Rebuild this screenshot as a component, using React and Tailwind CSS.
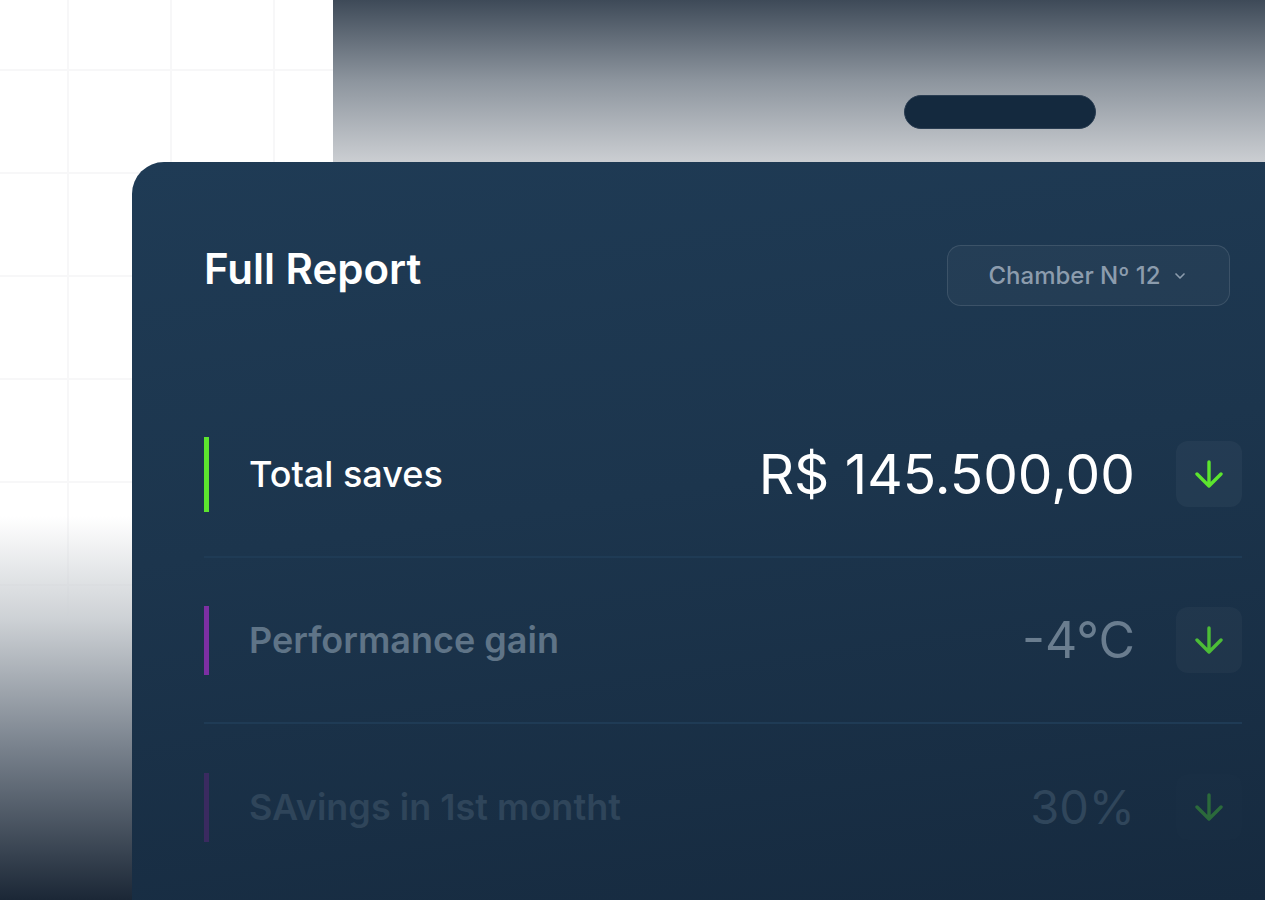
import { ChevronDown } from "lucide-react";

// ── Row data ─────────────────────────────────────────────
const ROWS = [
  {
    label: "Total saves",
    value: "R$ 145.500,00",
    bar: "bg-[#5ce52e] h-[75px]",
    labelCls: "text-white font-medium",
    valueCls: "text-white text-[55px]",
    arrow: "#5ce52e",
    box: "bg-[#ffffff0a]",
  },
  {
    label: "Performance gain",
    value: "-4°C",
    bar: "bg-[#7d2fa3] h-[69px]",
    labelCls: "text-[#5f7487] font-semibold",
    valueCls: "text-[#6a7d8f] text-[50px]",
    arrow: "#4cbd37",
    box: "bg-[#ffffff08]",
  },
  {
    label: "SAvings in 1st montht",
    value: "30%",
    bar: "bg-[#3a2a60] h-[69px]",
    labelCls: "text-[#2f455a] font-semibold",
    valueCls: "text-[#30465b] text-[47px]",
    arrow: "#2b6a3b",
    box: "bg-[#ffffff02]",
  },
];

function ArrowDownIcon({ color }) {
  return (
    <svg width="28" height="28" viewBox="0 0 28 28" fill="none">
      <path
        d="M14 2v24M2 14l12 12 12-12"
        stroke={color}
        strokeWidth="3.4"
        strokeLinecap="round"
        strokeLinejoin="round"
      />
    </svg>
  );
}

function Row({ row, last }) {
  return (
    <div
      className={`h-[166px] flex items-center ${
        last ? "" : "border-b-2 border-[#1f3b55]"
      }`}
    >
      <div className={`w-[5px] ${row.bar}`} />
      <div className={`ml-10 text-[36px] leading-[44px] ${row.labelCls}`}>
        {row.label}
      </div>
      <div className={`ml-auto leading-[64px] ${row.valueCls}`}>
        {row.value}
      </div>
      <div
        className={`ml-[41px] w-[66px] h-[66px] rounded-[12px] flex items-center justify-center ${row.box}`}
      >
        <ArrowDownIcon color={row.arrow} />
      </div>
    </div>
  );
}

export default function App() {
  return (
    <div className="relative w-full h-[900px] overflow-hidden bg-white font-['Inter','Noto_Sans',sans-serif] bg-[linear-gradient(to_right,#f7f7f8_2px,transparent_2px),linear-gradient(to_bottom,#f7f7f8_2px,transparent_2px)] bg-size-[103px_103px] bg-position-[67px_69px]">
      {/* ── Top strip ── */}
      <div className="flex h-[162px]">
        <div className="w-[333px] shrink-0" />
        <div className="flex-1 bg-[linear-gradient(to_bottom,#3e4a58,#8d959e_50%,#cbced2)] pl-[571px] pt-[95px]">
          <div className="w-[192px] h-[34px] rounded-full bg-[#14293e] border border-[#2a3d52]" />
        </div>
      </div>

      {/* ── Lower area ── */}
      <div className="flex h-[738px]">
        <div className="w-[132px] shrink-0 bg-[linear-gradient(to_bottom,rgba(255,255,255,0)_48%,rgba(205,209,213,1)_62%,rgba(122,131,142,1)_79%,#1b2736_100%)]" />

        {/* Card */}
        <div className="flex-1 rounded-tl-[32px] bg-[linear-gradient(172deg,#1f3b55_0%,#1c354d_45%,#162a3f_100%)] pl-[72px] pr-[23px] pt-[83px]">
          <div className="flex items-start justify-between">
            <h1 className="text-white text-[42px] leading-[48px] font-semibold">
              Full Report
            </h1>
            <button className="mr-3 w-[283px] h-[61px] rounded-[14px] border border-[#ffffff1c] bg-[#ffffff08] flex items-center justify-center gap-[12px] text-[#8c9cad] text-[24px] font-medium">
              Chamber Nº 12
              <ChevronDown size={16} strokeWidth={2.5} />
            </button>
          </div>

          <div className="mt-[86px]">
            {ROWS.map((r, i) => (
              <Row key={r.label} row={r} last={i === ROWS.length - 1} />
            ))}
          </div>
        </div>
      </div>
    </div>
  );
}
